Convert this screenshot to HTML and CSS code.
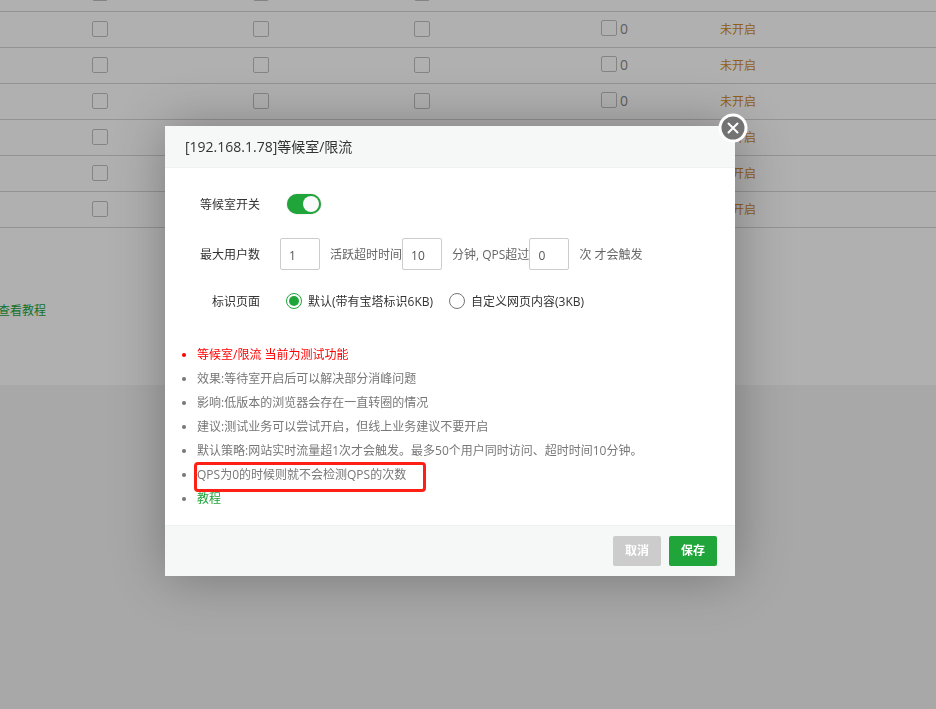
FILE: index.html
```
<!DOCTYPE html>
<html lang="zh-CN">
<head>
    <meta charset="UTF-8">
    <meta name="viewport" content="width=device-width, initial-scale=1.0">
    <title>等候室/限流</title>
    <link rel="stylesheet" href="styles.css">
</head>
<body>
    <div class="panel">
        <table class="sites">
            <colgroup>
                <col class="col-first">
                <col class="col-check">
                <col class="col-check">
                <col class="col-count">
                <col class="col-status">
                <col>
            </colgroup>
            <tbody>
                <tr><td></td><td><input type="checkbox" class="check"></td><td><input type="checkbox" class="check"></td><td><input type="checkbox" class="check"></td><td></td><td></td></tr>
                <tr><td></td><td><input type="checkbox" class="check"></td><td><input type="checkbox" class="check"></td><td><input type="checkbox" class="check"></td><td><label class="count"><input type="checkbox" class="check">0</label></td><td><a href="#" class="status">未开启</a></td></tr>
                <tr><td></td><td><input type="checkbox" class="check"></td><td><input type="checkbox" class="check"></td><td><input type="checkbox" class="check"></td><td><label class="count"><input type="checkbox" class="check">0</label></td><td><a href="#" class="status">未开启</a></td></tr>
                <tr><td></td><td><input type="checkbox" class="check"></td><td><input type="checkbox" class="check"></td><td><input type="checkbox" class="check"></td><td><label class="count"><input type="checkbox" class="check">0</label></td><td><a href="#" class="status">未开启</a></td></tr>
                <tr><td></td><td><input type="checkbox" class="check"></td><td></td><td></td><td></td><td><a href="#" class="status">未开启</a></td></tr>
                <tr><td></td><td><input type="checkbox" class="check"></td><td></td><td></td><td></td><td><a href="#" class="status">未开启</a></td></tr>
                <tr><td></td><td><input type="checkbox" class="check"></td><td></td><td></td><td></td><td><a href="#" class="status">未开启</a></td></tr>
            </tbody>
        </table>
        <a href="#" class="guide">查看教程</a>
    </div>

    <div class="shade"></div>

    <div class="modal" role="dialog" aria-labelledby="title">
        <div class="modal-title" id="title">[192.168.1.78]等候室/限流</div>
        <button class="close" aria-label="关闭">
            <svg width="30" height="30" viewBox="0 0 30 30">
                <circle cx="15" cy="15" r="13" fill="#737373" stroke="#fff" stroke-width="3"/>
                <path d="M10.5 10.5l9 9M19.5 10.5l-9 9" stroke="#fff" stroke-width="2" stroke-linecap="round"/>
            </svg>
        </button>
        <div class="modal-body">
            <div class="line">
                <label class="name" for="switch">等候室开关</label>
                <input type="checkbox" class="switch" id="switch" checked>
            </div>
            <div class="line">
                <label class="name" for="users">最大用户数</label>
                <input type="text" class="num" id="users" value="1">
                <label class="unit" for="timeout">活跃超时时间</label>
                <input type="text" class="num" id="timeout" value="10">
                <label class="unit" for="qps">分钟, QPS超过</label>
                <input type="text" class="num" id="qps" value="0">
                <span class="unit">次 才会触发</span>
            </div>
            <div class="line">
                <span class="name">标识页面</span>
                <label class="choice"><input type="radio" name="page" class="radio" checked>默认(带有宝塔标识6KB)</label>
                <label class="choice"><input type="radio" name="page" class="radio">自定义网页内容(3KB)</label>
            </div>
            <ul class="help">
                <li class="warn">等候室/限流 当前为测试功能</li>
                <li>效果:等待室开启后可以解决部分消峰问题</li>
                <li>影响:低版本的浏览器会存在一直转圈的情况</li>
                <li>建议:测试业务可以尝试开启，但线上业务建议不要开启</li>
                <li>默认策略:网站实时流量超1次才会触发。最多50个用户同时访问、超时时间10分钟。</li>
                <li class="marked">QPS为0的时候则就不会检测QPS的次数</li>
                <li><a href="#">教程</a></li>
            </ul>
        </div>
        <div class="modal-footer">
            <button class="btn cancel">取消</button>
            <button class="btn save">保存</button>
        </div>
    </div>
</body>
</html>
```
FILE: styles.css
```
*, *::before, *::after{
    box-sizing: border-box;
}
body{
    margin: 0;
    min-height: 100vh;
    overflow: hidden;
    background-color: #f1f1f1;
    color: #333;
    font-family: "Open Sans", "Noto Sans CJK SC", sans-serif;
    font-size: 12px;
    line-height: 24px;
}
a{
    color: #20a53a;
    text-decoration: none;
}
input{
    appearance: none;
    margin: 0;
    flex: none;
}

/* page behind the dialog */
.panel{
    background-color: #fdfdfd;
    /* list is scrolled down a bit */
    margin-top: -24px;
    padding-bottom: 62px;
    overflow: hidden;
}
.sites{
    width: 100%;
    table-layout: fixed;
    border-collapse: separate;
    border-spacing: 0;
}
.sites td{
    height: 36px;
    padding: 0;
    border-bottom: 1px solid #d3d3d3;
}
.col-first{
    width: 92px;
}
.col-check{
    width: 161px;
}
.col-count{
    width: 187px;
}
.col-status{
    width: 119px;
}
.check{
    display: block;
    width: 16px;
    height: 16px;
    margin-bottom: 2px;
    border: 1px solid #bebebe;
    border-radius: 2px;
}
.count{
    display: flex;
    align-items: center;
    gap: 3px;
    margin-bottom: 2px;
    color: #888;
    font-size: 14px;
}
.status{
    color: #d08a20;
}
.guide{
    display: block;
    margin: 71px 0 0 -2px;
}
.shade{
    position: fixed;
    inset: 0;
    background-color: rgba(0,0,0,.3);
}

/* dialog */
.modal{
    position: absolute;
    top: 126px;
    left: 165px;
    width: 570px;
    background-color: #fff;
    box-shadow: 1px 1px 50px rgba(0,0,0,.3);
}
.modal-title{
    height: 42px;
    padding: 0 20px;
    line-height: 41px;
    font-size: 14px;
    background-color: #f6f8f8;
    border-bottom: 1px solid #edf1f2;
}
.close{
    position: absolute;
    top: -13px;
    right: -13px;
    width: 30px;
    height: 30px;
    padding: 0;
    border: 0;
    background: none;
    cursor: pointer;
}
.close svg{
    display: block;
}
.modal-body{
    padding: 20px 0 14px;
}
.line{
    display: flex;
    align-items: center;
    height: 32px;
    margin-bottom: 18px;
}
.line:nth-child(2){
    margin-bottom: 15px;
}
.name, .unit, .choice{
    padding-top: 2px;
}
.name{
    width: 95px;
    margin-right: 20px;
    text-align: right;
}
.switch{
    width: 34px;
    height: 20px;
    margin-left: 7px;
    padding: 2px;
    border-radius: 10px;
    background-color: #20a53a;
    box-shadow: 0 0 1px #999;
}
.switch::before{
    content: "";
    display: block;
    width: 16px;
    height: 16px;
    border-radius: 50%;
    background-color: #fafafa;
}
.switch:checked::before{
    margin-left: auto;
}
.num{
    width: 40px;
    height: 32px;
    padding: 2px 8px 0;
    border: 1px solid #ccc;
    border-radius: 2px;
    color: #555;
    font: inherit;
}
.unit{
    margin-left: 10px;
    color: #666;
}
.choice{
    display: flex;
    align-items: center;
    gap: 6px;
    margin-left: 6px;
}
.choice + .choice{
    margin-left: 16px;
}
.radio{
    width: 16px;
    height: 16px;
    margin-bottom: 2px;
    padding: 2px;
    border: 1px solid #767676;
    border-radius: 50%;
}
.radio:checked{
    border-color: #20a53a;
}
.radio:checked::before{
    content: "";
    display: block;
    width: 10px;
    height: 10px;
    border-radius: 50%;
    background-color: #20a53a;
}
.help{
    margin: 26px 0 0;
    padding-left: 32px;
    color: #777;
}
.warn{
    color: red;
}
.marked{
    position: relative;
}
.marked::after{
    content: "";
    position: absolute;
    top: -1px;
    left: -3px;
    width: 232px;
    height: 30px;
    border: 3px solid #ff2015;
    border-radius: 4px;
}
.modal-footer{
    display: flex;
    justify-content: flex-end;
    gap: 8px;
    padding: 10px 18px;
    background-color: #f6f8f8;
    border-top: 1px solid #edf1f2;
}
.btn{
    width: 48px;
    height: 30px;
    padding: 0;
    border: 0;
    border-radius: 2px;
    color: #fff;
    font: inherit;
    font-weight: bold;
}
.cancel{
    background-color: #ccc;
}
.save{
    background-color: #20a53a;
}
```
